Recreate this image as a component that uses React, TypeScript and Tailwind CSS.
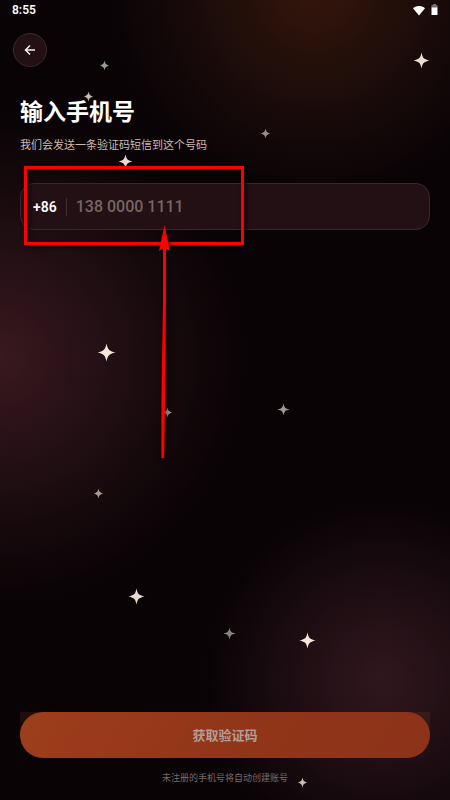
const stars = [
  { x: 104, y: 65, r: 5, opacity: 0.65 },
  { x: 88, y: 96, r: 5, opacity: 0.8 },
  { x: 421, y: 60, r: 8, opacity: 0.95 },
  { x: 265, y: 133, r: 5, opacity: 0.6 },
  { x: 125, y: 161, r: 7, opacity: 0.95 },
  { x: 106, y: 352, r: 9, opacity: 1 },
  { x: 167, y: 412, r: 5, opacity: 0.65 },
  { x: 283, y: 409, r: 6, opacity: 0.65 },
  { x: 98, y: 493, r: 5, opacity: 0.65 },
  { x: 136, y: 596, r: 8, opacity: 0.95 },
  { x: 229, y: 633, r: 6, opacity: 0.55 },
  { x: 307, y: 640, r: 8, opacity: 1 },
  { x: 302, y: 782, r: 5, opacity: 0.8 },
]

function Stars() {
  return (
    <svg className="absolute inset-0 h-full w-full" aria-hidden="true">
      {stars.map((s) => (
        <path
          key={`${s.x}-${s.y}`}
          d="M0-1C.14-.36 .24-.18 1 0C.24 .18 .14 .36 0 1C-.14 .36-.24 .18-1 0C-.24-.18-.14-.36 0-1Z"
          transform={`translate(${s.x + 0.5} ${s.y + 0.5}) scale(${s.r})`}
          fill="#f6e7dc"
          opacity={s.opacity}
        />
      ))}
    </svg>
  )
}

function StatusBar() {
  return (
    <header className="flex h-5 items-center justify-between px-3 text-xs font-semibold">
      <span>8:55</span>
      <div className="flex items-center gap-1.5">
        <svg width="12" height="11" viewBox="0 0 13 11" fill="#fff" aria-hidden="true">
          <path d="M0 3C3.6-.2 9.4-.2 13 3L6.5 11Z" />
        </svg>
        <svg width="7" height="12" viewBox="0 0 7 12" fill="#fff" aria-hidden="true">
          <path d="M2 0h3v1h1.500v3H.5V1H2z" opacity="0.4" />
          <path d="M.5 3.500h6V11h-6z" />
        </svg>
      </div>
    </header>
  )
}

// Red box and arrow that point at the phone field
function Callout() {
  return (
    <>
      <div className="pointer-events-none absolute top-[166px] left-6 h-[79px] w-[220px] border-3 border-[#ff0000] shadow-[2px_2px_4px_rgba(0,0,0,0.7),inset_2px_2px_4px_rgba(0,0,0,0.7)]" />
      <svg
        className="pointer-events-none absolute top-[224px] left-[154px] drop-shadow-[2px_2px_2px_rgba(0,0,0,0.6)]"
        width="20"
        height="236"
        viewBox="0 0 20 236"
        fill="#ff0000"
        aria-hidden="true"
      >
        <path d="M10.500 1L16 27L12 24.500V76L11.500 128L11 180L10.200 234H7.400V180L8.200 128L9 76V24.500L5 27Z" />
      </svg>
    </>
  )
}

export default function App() {
  return (
    <div className="relative flex min-h-screen flex-col overflow-hidden bg-[#090305] bg-[radial-gradient(circle_at_70%_-10px,#35150d_0,#241009_70px,#1c0c0b_110px,transparent_205px),radial-gradient(circle_at_0_358px,#39181f_0,#261116_90px,#16090c_170px,transparent_245px),radial-gradient(circle_at_85%_85%,#30171e_0,#1f0e13_85px,transparent_178px)] font-['Roboto','Noto_Sans_CJK_SC',sans-serif] text-white">
      <Stars />
      <div className="relative flex grow flex-col">
        <StatusBar />
        <nav className="px-[13px] pt-[13px]">
          <button
            type="button"
            aria-label="返回"
            className="flex size-[34px] items-center justify-center rounded-full border border-[#3a292e] bg-[#221015]"
          >
            <svg
              width="12"
              height="12"
              viewBox="0 0 12 12"
              fill="none"
              stroke="#f6eee9"
              strokeWidth="1.500"
              aria-hidden="true"
            >
              <path d="M11 6H1.500M6 1.500L1.500 6L6 10.500" />
            </svg>
          </button>
        </nav>

        <main className="px-5 pt-[30px]">
          <h1 className="text-[23px] leading-8 font-bold">输入手机号</h1>
          <p className="mt-[9px] text-[11px] leading-4 text-[#cdb9b2]">我们会发送一条验证码短信到这个号码</p>
          <div className="mt-[29px] flex h-[47px] items-center rounded-[14px] border border-[#38282c] bg-[#221015] px-3">
            <label htmlFor="phone" className="text-sm font-semibold">+86</label>
            <span className="mx-[9px] h-[18px] w-px bg-[#43312f]" />
            <input
              id="phone"
              type="tel"
              placeholder="138 0000 1111"
              className="min-w-0 grow bg-transparent text-base font-medium outline-none placeholder:text-[#766560]"
            />
          </div>
        </main>

        <footer className="mt-auto px-5 pb-[14px] text-center">
          <div className="bg-linear-to-b from-[#ff6b2c]/10 to-transparent">
            <button
              type="button"
              className="h-[46px] w-full rounded-full bg-linear-[120deg] from-[#9d3e1b] via-[#923619] to-[#8c3218] pt-0.5 text-[13px] font-bold text-[#b39d97]"
            >
              获取验证码
            </button>
          </div>
          <p className="mt-3 text-[9px] leading-4 text-[#7b6965]">未注册的手机号将自动创建账号</p>
        </footer>
      </div>
      <Callout />
    </div>
  )
}
